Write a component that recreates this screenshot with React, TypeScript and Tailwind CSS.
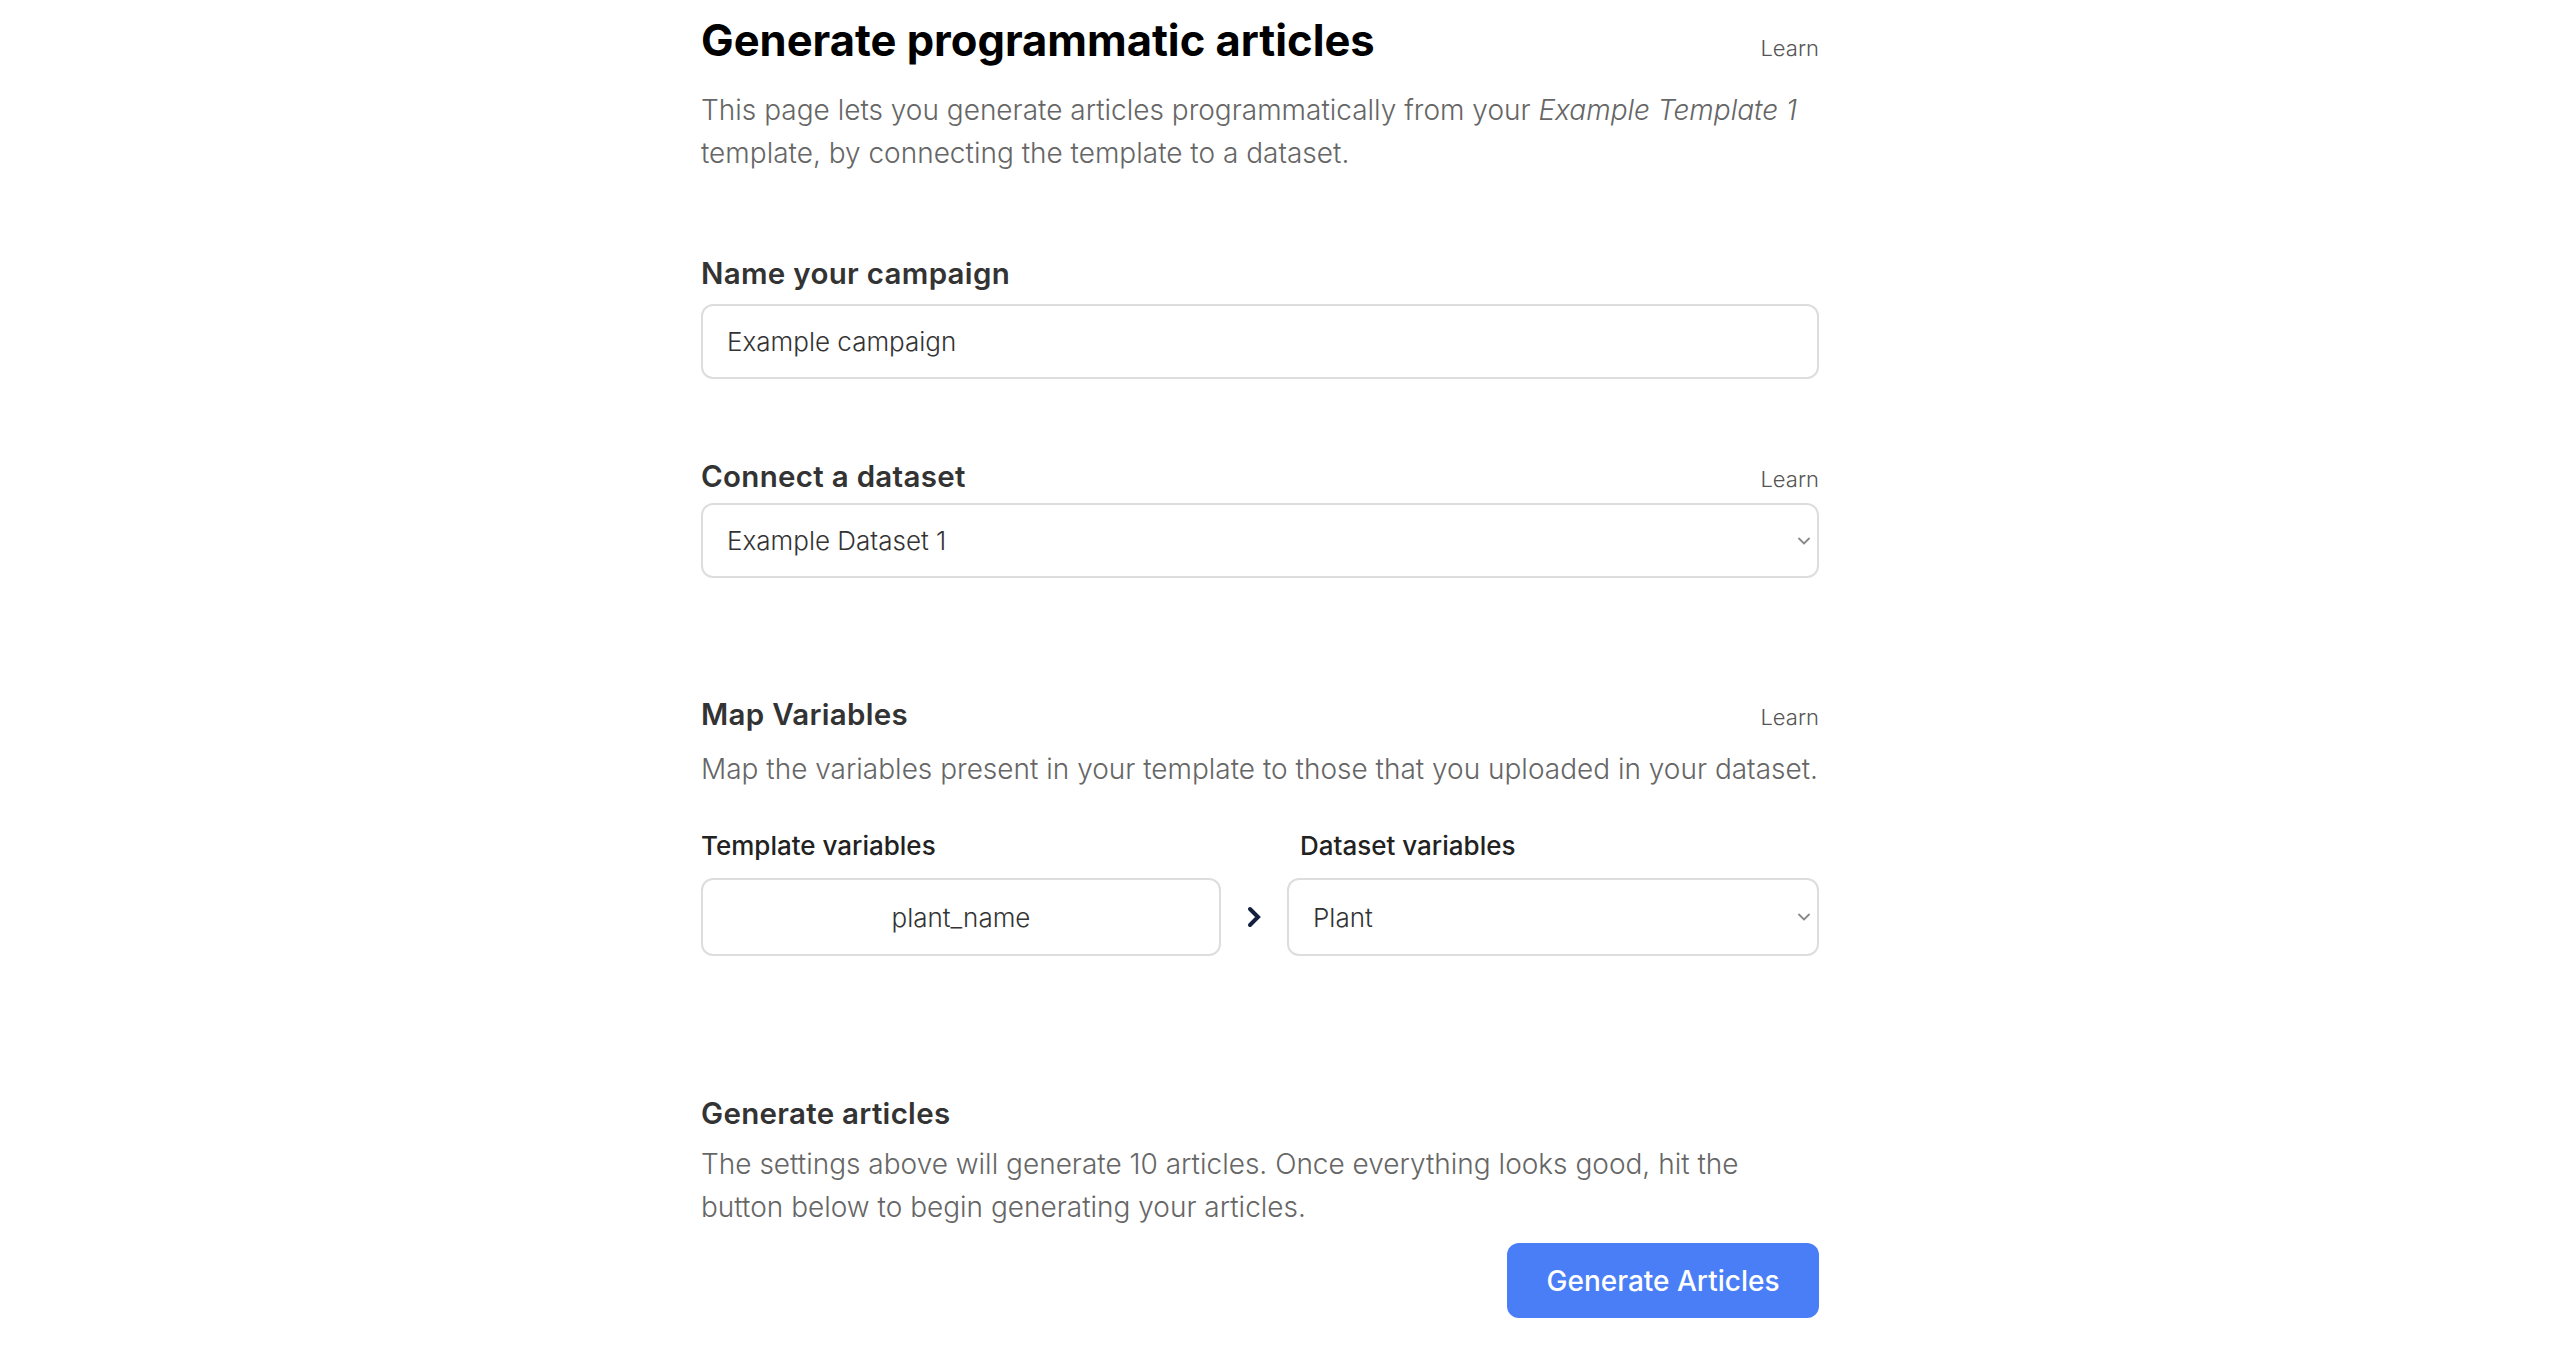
import React from "react";

function Learn() {
  return <span className="text-[22px] leading-[36px] font-light text-[#555555]">Learn</span>;
}

function Chevron() {
  return (
    <svg width="14" height="10" viewBox="0 0 14 10" className="shrink-0">
      <path d="M2 2.5 L7 7.5 L12 2.5" fill="none" stroke="#8a8a8a" strokeWidth="1.8" strokeLinecap="round" strokeLinejoin="round" />
    </svg>
  );
}

export default function App() {
  return (
    <div className="min-h-screen w-full bg-white font-['Inter',sans-serif]">
      <div className="ml-[701px] w-[1118px] pt-[16px] pb-[32px] flex flex-col">
        <div className="h-[48px] flex items-baseline justify-between">
          <h1 className="text-[43.5px] leading-[48px] font-bold text-black">Generate programmatic articles</h1>
          <Learn />
        </div>
        <p className="mt-[25px] text-[28px] leading-[43px] font-light text-[#666666]">
          This page lets you generate articles programmatically from your <em>Example Template 1</em> template, by connecting the template to a dataset.
        </p>

        <div className="mt-[80px] h-[36px] text-[29.5px] leading-[36px] tracking-[0.3px] font-semibold text-[#333333]">Name your campaign</div>
        <div className="mt-[13px] h-[75px] rounded-[12px] border-2 border-[#dddddd] flex items-center pl-[24px] text-[26px] font-light text-[#333333]">
          Example campaign
        </div>

        <div className="mt-[79px] h-[36px] flex items-baseline justify-between">
          <div className="text-[29.5px] leading-[36px] tracking-[0.3px] font-semibold text-[#333333]">Connect a dataset</div>
          <Learn />
        </div>
        <div className="mt-[9px] h-[75px] rounded-[12px] border-2 border-[#dddddd] flex items-center justify-between pl-[24px] pr-[6px] text-[26px] font-light text-[#333333]">
          <span>Example Dataset 1</span>
          <Chevron />
        </div>

        <div className="mt-[118px] h-[36px] flex items-baseline justify-between">
          <div className="text-[29.5px] leading-[36px] tracking-[0.3px] font-semibold text-[#333333]">Map Variables</div>
          <Learn />
        </div>
        <p className="mt-[16px] h-[42px] text-[28px] leading-[42px] font-light text-[#666666] whitespace-nowrap">
          Map the variables present in your template to those that you uploaded in your dataset.
        </p>

        <div className="mt-[40px] grid grid-cols-[520px_66px_1fr] grid-rows-[32px_78px] gap-y-[16px]">
          <div className="text-[26px] leading-[32px] font-medium text-[#222222]">Template variables</div>
          <div />
          <div className="pl-[13px] text-[26px] leading-[32px] font-medium text-[#222222]">Dataset variables</div>
          <div className="h-[78px] rounded-[12px] border-2 border-[#dddddd] flex items-center justify-center text-[26px] font-light text-[#333333]">
            plant_name
          </div>
          <div className="flex items-center justify-center">
            <svg width="14" height="22" viewBox="0 0 14 22">
              <path d="M3 3 L11 11 L3 19" fill="none" stroke="#13213f" strokeWidth="4" strokeLinejoin="miter" strokeLinecap="round" />
            </svg>
          </div>
          <div className="h-[78px] rounded-[12px] border-2 border-[#dddddd] flex items-center justify-between pl-[24px] pr-[6px] text-[26px] font-light text-[#333333]">
            <span>Plant</span>
            <Chevron />
          </div>
        </div>

        <div className="mt-[139px] h-[36px] text-[29.5px] leading-[36px] tracking-[0.3px] font-semibold text-[#333333]">Generate articles</div>
        <p className="mt-[12px] text-[28px] leading-[43px] font-light text-[#666666]">
          The settings above will generate 10 articles. Once everything looks good, hit the
          <br />
          button below to begin generating your articles.
        </p>
        <button className="mt-[14px] self-end w-[312px] h-[75px] rounded-[12px] bg-[#4a7ef6] text-white text-[28px] font-medium">
          Generate Articles
        </button>
      </div>
    </div>
  );
}
